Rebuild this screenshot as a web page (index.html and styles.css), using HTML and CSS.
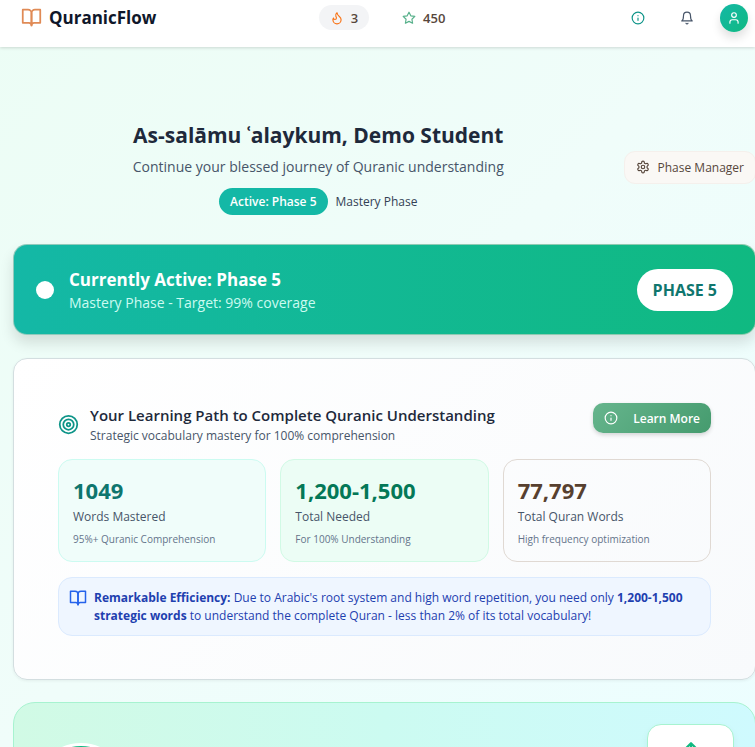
FILE: index.html
```html
<!DOCTYPE html>
<html lang="en">
<head>
<meta charset="utf-8">
<meta name="viewport" content="width=device-width, initial-scale=1">
<title>QuranicFlow</title>
<link rel="stylesheet" href="styles.css">
</head>
<body>
<header class="topbar">
  <a class="brand" href="#">
    <svg class="icon brand-icon" viewBox="0 0 24 24"><path d="M2 3h6a4 4 0 0 1 4 4v14a3 3 0 0 0-3-3H2z"/><path d="M22 3h-6a4 4 0 0 0-4 4v14a3 3 0 0 1 3-3h7z"/></svg>
    <span>QuranicFlow</span>
  </a>
  <div class="counters">
    <span class="counter streak">
      <svg class="icon" viewBox="0 0 24 24"><path d="M8.5 14.5A2.5 2.5 0 0 0 11 12c0-1.38-.5-2-1-3-1.072-2.143-.224-4.054 2-6 .5 2.5 2 4.9 4 6.5 2 1.6 3 3.5 3 5.5a7 7 0 1 1-14 0c0-1.153.433-2.294 1-3a2.5 2.5 0 0 0 2.5 2.5z"/></svg>
      <span>3</span>
    </span>
    <span class="counter points">
      <svg class="icon" viewBox="0 0 24 24"><path d="M12 2l3.09 6.26L22 9.27l-5 4.87 1.18 6.88L12 17.77l-6.18 3.25L7 14.14 2 9.27l6.91-1.01z"/></svg>
      <span>450</span>
    </span>
  </div>
  <div class="actions">
    <button class="icon-button info" type="button" aria-label="Information"><svg class="icon" viewBox="0 0 24 24"><circle cx="12" cy="12" r="10"/><path d="M12 16v-4M12 8h.01"/></svg></button>
    <button class="icon-button bell" type="button" aria-label="Notifications"><svg class="icon" viewBox="0 0 24 24"><path d="M6 8a6 6 0 0 1 12 0c0 7 3 9 3 9H3s3-2 3-9"/><path d="M10.3 21a1.94 1.94 0 0 0 3.4 0"/></svg></button>
    <button class="avatar" type="button" aria-label="Profile"><svg class="icon" viewBox="0 0 24 24"><path d="M19 21v-2a4 4 0 0 0-4-4H9a4 4 0 0 0-4 4v2"/><circle cx="12" cy="7" r="4"/></svg></button>
  </div>
</header>
<main class="page">
  <section class="hero">
    <div class="hero-text">
      <h1>As-salāmu ʿalaykum, Demo Student</h1>
      <p class="tagline">Continue your blessed journey of Quranic understanding</p>
      <div class="phase-line"><span class="phase-pill">Active: Phase 5</span><span>Mastery Phase</span></div>
    </div>
    <button class="manager" type="button">
      <svg class="icon" viewBox="0 0 24 24"><path d="M12.22 2h-.44a2 2 0 0 0-2 2v.18a2 2 0 0 1-1 1.73l-.43.25a2 2 0 0 1-2 0l-.15-.08a2 2 0 0 0-2.73.73l-.22.38a2 2 0 0 0 .73 2.73l.15.1a2 2 0 0 1 1 1.72v.51a2 2 0 0 1-1 1.74l-.15.09a2 2 0 0 0-.73 2.73l.22.38a2 2 0 0 0 2.73.73l.15-.08a2 2 0 0 1 2 0l.43.25a2 2 0 0 1 1 1.73V20a2 2 0 0 0 2 2h.44a2 2 0 0 0 2-2v-.18a2 2 0 0 1 1-1.73l.43-.25a2 2 0 0 1 2 0l.15.08a2 2 0 0 0 2.73-.73l.22-.39a2 2 0 0 0-.73-2.73l-.15-.08a2 2 0 0 1-1-1.74v-.5a2 2 0 0 1 1-1.74l.15-.09a2 2 0 0 0 .73-2.73l-.22-.38a2 2 0 0 0-2.73-.73l-.15.08a2 2 0 0 1-2 0l-.43-.25a2 2 0 0 1-1-1.73V4a2 2 0 0 0-2-2z"/><circle cx="12" cy="12" r="3"/></svg>
      <span>Phase Manager</span>
    </button>
  </section>

  <section class="banner">
    <span class="dot"></span>
    <div class="banner-text">
      <h2>Currently Active: Phase 5</h2>
      <p>Mastery Phase - Target: 99% coverage</p>
    </div>
    <span class="banner-badge">PHASE 5</span>
  </section>

  <section class="path-card">
    <div class="path-head">
      <svg class="icon target" viewBox="0 0 24 24"><circle cx="12" cy="12" r="10"/><circle cx="12" cy="12" r="6"/><circle cx="12" cy="12" r="2"/></svg>
      <div class="path-title">
        <h2>Your Learning Path to Complete Quranic Understanding</h2>
        <p>Strategic vocabulary mastery for 100% comprehension</p>
      </div>
      <button class="learn" type="button">
        <svg class="icon" viewBox="0 0 24 24"><circle cx="12" cy="12" r="10"/><path d="M12 16v-4M12 8h.01"/></svg>
        <span>Learn More</span>
      </button>
    </div>
    <div class="stats">
      <div class="stat mastered"><strong>1049</strong><span class="label">Words Mastered</span><span class="note">95%+ Quranic Comprehension</span></div>
      <div class="stat needed"><strong>1,200-1,500</strong><span class="label">Total Needed</span><span class="note">For 100% Understanding</span></div>
      <div class="stat total"><strong>77,797</strong><span class="label">Total Quran Words</span><span class="note">High frequency optimization</span></div>
    </div>
    <div class="efficiency">
      <svg class="icon" viewBox="0 0 24 24"><path d="M2 3h6a4 4 0 0 1 4 4v14a3 3 0 0 0-3-3H2z"/><path d="M22 3h-6a4 4 0 0 0-4 4v14a3 3 0 0 1 3-3h7z"/></svg>
      <p><b>Remarkable Efficiency:</b> Due to Arabic's root system and high word repetition, you need only <b>1,200-1,500 strategic words</b> to understand the complete Quran - less than 2% of its total vocabulary!</p>
    </div>
  </section>

  <section class="progress-card">
    <span class="medallion"></span>
    <div class="rise">
      <svg class="icon" viewBox="0 0 24 24"><path d="M12 21V3M4 11l8-8 8 8"/></svg>
    </div>
  </section>
</main>
</body>
</html>
```

FILE: styles.css
```css
* { box-sizing: border-box; }
html { height: 100%; overflow: hidden; }
body {
  margin: 0;
  height: 100%;
  overflow: hidden;
  font-family: "Open Sans", "Noto Sans", sans-serif;
  font-size: 13px;
  color: #334155;
  background: linear-gradient(135deg, #ecfdf5, #f0fdfa 50%, #ecfeff);
}
h1, h2, p { margin: 0; }
button { font: inherit; border: 0; background: none; padding: 0; }
.icon {
  width: 14px;
  height: 14px;
  flex: none;
  fill: none;
  stroke: currentColor;
  stroke-width: 2;
  stroke-linecap: round;
  stroke-linejoin: round;
}

.topbar {
  display: grid;
  grid-template-columns: 1fr auto 1fr;
  align-items: center;
  height: 47px;
  padding: 0 7px 12px 21px;
  background: #fff;
  box-shadow: 0 1px 3px rgba(0, 0, 0, 0.15);
}
.brand {
  display: flex;
  align-items: center;
  gap: 7px;
  font-size: 17px;
  font-weight: 700;
  color: #0f172a;
  text-decoration: none;
}
.brand-icon { width: 21px; height: 21px; color: #e08a55; }
.counters { display: flex; align-items: center; gap: 22px; padding-left: 6px; font-weight: 600; color: #57473c; }
.counter { display: flex; align-items: center; gap: 7px; height: 25px; padding: 0 11px; border-radius: 13px; }
.streak { background: #f3f4f6; }
.streak .icon { color: #f97316; }
.points .icon { color: #56b08a; }
.actions { display: flex; justify-content: flex-end; align-items: center; gap: 18px; }
.icon-button { display: grid; place-items: center; width: 31px; height: 31px; }
.info { color: #0d9488; }
.bell { color: #475569; }
.avatar {
  display: grid;
  place-items: center;
  width: 28px;
  height: 28px;
  border-radius: 50%;
  color: #fff;
  background: linear-gradient(135deg, #14b8a6, #10b981);
  box-shadow: 0 6px 10px rgba(0, 0, 0, 0.12);
}

.page { margin-right: -1px; padding: 72px 0 0 13px; }
.hero { display: flex; align-items: center; margin-bottom: 29px; }
.hero-text { flex: 1; text-align: center; }
h1 { font-size: 21px; line-height: 32px; font-weight: 700; color: #1e293b; }
.tagline { font-size: 14px; line-height: 32px; color: #475569; }
.phase-line { display: flex; justify-content: center; align-items: center; gap: 8px; margin-top: 5px; font-size: 12px; font-weight: 500; }
.phase-pill { padding: 0 11px; line-height: 27px; border-radius: 14px; font-weight: 600; color: #fff; background: #14b8a6; }
.manager {
  display: flex;
  align-items: center;
  gap: 8px;
  height: 33px;
  padding: 0 11px;
  border: 1px solid #f5f0ec;
  border-radius: 11px;
  background: #faf8f5;
  font-size: 12px;
  font-weight: 500;
  color: #57473c;
}

.banner {
  display: flex;
  align-items: center;
  height: 91px;
  padding: 0 22px;
  border: 1px solid rgba(226, 214, 204, 0.6);
  border-radius: 14px;
  color: #fff;
  background: linear-gradient(90deg, #14b8a6, #10b981) border-box;
  box-shadow: 0 8px 14px rgba(0, 0, 0, 0.12);
}
.dot { width: 18px; height: 18px; margin-right: 15px; border-radius: 50%; background: #fff; }
.banner-text { flex: 1; padding-top: 2px; }
.banner h2 { font-size: 17px; line-height: 24px; }
.banner p { font-size: 14px; line-height: 22px; color: #ccfbf1; }
.banner-badge { padding: 0 16px; border-radius: 21px; line-height: 42px; font-size: 16px; font-weight: 700; color: #0f766e; background: #fff; }

.path-card {
  margin-top: 23px;
  padding: 44px 44px 43px;
  border: 1px solid #d3dee0;
  border-radius: 14px;
  background: linear-gradient(135deg, #fff, #f8fafc);
  box-shadow: 0 1px 3px rgba(0, 0, 0, 0.06);
}
.path-head { display: flex; align-items: center; gap: 11px; margin-bottom: 14px; }
.target { width: 21px; height: 21px; color: #0d9488; }
.path-title { flex: 1; }
.path-title h2 { font-size: 15px; line-height: 24px; font-weight: 600; color: #1e293b; }
.path-title p { font-size: 12px; line-height: 18px; color: #475569; }
.learn {
  display: flex;
  align-items: center;
  align-self: flex-start;
  gap: 15px;
  height: 30px;
  padding: 0 11px;
  border-radius: 10px;
  font-size: 12px;
  font-weight: 600;
  color: #fff;
  background: linear-gradient(135deg, #66b58d, #459b6e);
  box-shadow: 0 2px 4px rgba(0, 0, 0, 0.16);
}
.stats { display: grid; grid-template-columns: repeat(3, 1fr); gap: 14px; }
.stat { display: flex; flex-direction: column; padding: 14px; border: 1px solid; border-radius: 14px; }
.stat strong { font-size: 22px; line-height: 32px; }
.label { margin-bottom: 4px; font-size: 12px; line-height: 21px; color: #475569; }
.note { font-size: 10px; line-height: 16px; color: #64748b; }
.mastered { border-color: #ccfbf1; background: #f0fdfa; }
.mastered strong { color: #0f766e; }
.needed { border-color: #d1fae5; background: #ecfdf5; }
.needed strong { color: #047857; }
.total { border-color: #e0d9d3; }
.total strong { color: #57402f; }
.efficiency {
  display: flex;
  gap: 7px;
  margin-top: 15px;
  padding: 11px 11px 10px 10px;
  border: 1px solid #dbeafe;
  border-radius: 14px;
  color: #1e40af;
  background: #eff6ff;
}
.efficiency .icon { width: 18px; height: 18px; color: #2563eb; }
.efficiency p { font-size: 12px; line-height: 18px; }

.progress-card {
  display: flex;
  justify-content: space-between;
  align-items: center;
  margin-top: 22px;
  padding: 21px;
  border: 1px solid #a7f3d0;
  border-radius: 22px;
  background: linear-gradient(90deg, #d1fae5, #ccfbf1 50%, #cffafe);
}
.medallion { width: 92px; height: 92px; border: 3px solid #fff; border-radius: 50%; background: #10b981; }
.rise {
  display: flex;
  justify-content: center;
  width: 87px;
  height: 130px;
  padding-top: 16px;
  border: 1px solid #a7f3d0;
  border-radius: 14px;
  color: #10b981;
  background: #fff;
  box-shadow: 0 4px 8px rgba(0, 0, 0, 0.05);
}
.rise .icon { width: 18px; height: 18px; stroke-width: 3; }
```
